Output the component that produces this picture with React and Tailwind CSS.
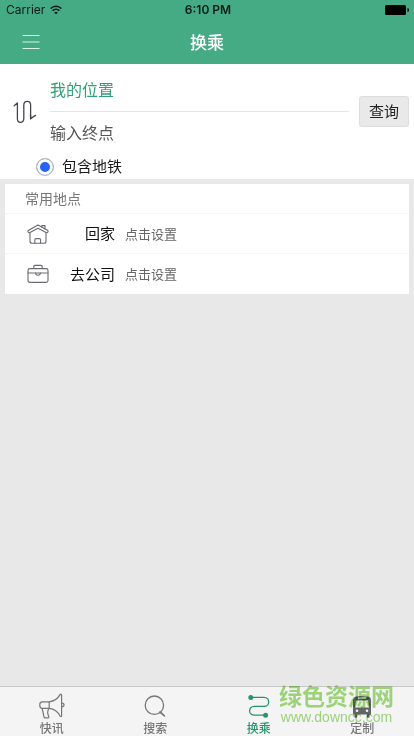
import React, { useState } from 'react';

const PLACES = [
  { id: 'home', name: '回家', Icon: HomeIcon },
  { id: 'work', name: '去公司', Icon: BriefcaseIcon },
];

const TABS = [
  { id: 'news', label: '快讯', Icon: MegaphoneIcon },
  { id: 'search', label: '搜索', Icon: SearchIcon },
  { id: 'transfer', label: '换乘', Icon: RouteIcon },
  { id: 'custom', label: '定制', Icon: BusIcon },
];

function WifiIcon() {
  return (
    <svg width="12" height="10" viewBox="0 0 12 10" fill="none" stroke="#0b1a14" strokeWidth="1.5" aria-hidden="true">
      <path d="M0.6 3.6 C3.6 0.4 8.4 0.4 11.4 3.6" />
      <path d="M2.6 5.7 C4.5 3.7 7.5 3.7 9.4 5.7" />
      <path d="M6 9.3 L4.2 7.4 C5.2 6.4 6.8 6.4 7.8 7.4 Z" fill="#0b1a14" stroke="none" />
    </svg>
  );
}

function BatteryIcon() {
  return (
    <svg width="25" height="10" viewBox="0 0 25 10" fill="#000" aria-hidden="true">
      <rect x="0" y="0" width="21" height="10" rx="1.5" />
      <path d="M22.5 3 C24.6 3.6 24.6 6.4 22.5 7 Z" />
    </svg>
  );
}

function SwapIcon() {
  return (
    <svg width="24" height="24" viewBox="0 0 24 24" fill="none" stroke="#44444c" strokeWidth="1.3" strokeLinecap="round" strokeLinejoin="round" aria-hidden="true">
      <path d="M1.2 5.8 L4.4 3 V18.8 C4.4 23.6 10.8 23.6 10.8 18.8 V5 C10.8 0.2 17.6 0.2 17.6 5 V18.8 L22.4 15.4" />
      <path d="M17.6 18.8 V15.6" />
    </svg>
  );
}

function HomeIcon() {
  return (
    <svg width="22" height="20" viewBox="0 0 22 20" fill="none" stroke="#6a6a72" strokeWidth="1.1" strokeLinecap="round" strokeLinejoin="round" aria-hidden="true">
      <path d="M11 0.9 L20.4 6.2 C21.8 7.2 20.7 9.3 19 8.6 L11 4.2 L3 8.6 C1.3 9.3 0.2 7.2 1.6 6.2 Z" />
      <path d="M3 8.8 V17.2 Q3 19.2 5 19.2 H17 Q19 19.2 19 17.2 V8.8" />
      <path d="M7.8 19 V15.8 Q7.8 14.6 9 14.6 H12.4 Q13.6 14.6 13.6 15.8 V19" />
      <path d="M14.8 2.9 V1.6 H18 V4.8" />
    </svg>
  );
}

function BriefcaseIcon() {
  return (
    <svg width="22" height="20" viewBox="0 0 22 20" fill="none" stroke="#6a6a72" strokeWidth="1.1" strokeLinecap="round" strokeLinejoin="round" aria-hidden="true">
      <rect x="1" y="4.6" width="20" height="13.8" rx="1.8" />
      <path d="M6.8 4.4 V2.6 Q6.8 1.4 8 1.4 H14 Q15.2 1.4 15.2 2.6 V4.4" />
      <path d="M1 9 H8.6 C8.8 12 13.2 12 13.4 9 H21" />
      <path d="M8.6 9 H13.4" />
    </svg>
  );
}

function MegaphoneIcon() {
  return (
    <svg width="26" height="26" viewBox="0 0 26 26" fill="none" stroke="#77777a" strokeWidth="1.2" strokeLinecap="round" strokeLinejoin="round" aria-hidden="true">
      <path d="M10.2 8.8 H3.4 Q0.8 8.8 0.8 11.6 V12.6 Q0.8 15.4 3.4 15.4 H10.2 Z" />
      <path d="M10.2 8.8 C15.4 8.2 19 5.4 21.2 1.4 Q22.6 0.6 22.6 2.4 V22.4 Q22.6 24.2 21.2 23.2 C19 19 15.4 16 10.2 15.4" />
      <path d="M22.6 10 C25.8 9.8 25.8 14 22.6 13.8" />
      <path d="M3.2 15.6 L5 24 Q5.2 24.8 6 24.8 H9 Q10.2 24.8 9.8 23.6 L8.8 20.8 Q8.4 19.4 9 17.8 L9.6 15.6" />
    </svg>
  );
}

function SearchIcon() {
  return (
    <svg width="26" height="26" viewBox="0 0 26 26" fill="none" stroke="#77777a" strokeWidth="1.3" strokeLinecap="round" aria-hidden="true">
      <circle cx="12.4" cy="12.2" r="9.2" />
      <path d="M18 19 L22.4 22.8" strokeWidth="1.7" />
    </svg>
  );
}

function RouteIcon() {
  return (
    <svg width="26" height="26" viewBox="0 0 26 26" fill="none" stroke="#2a9370" strokeWidth="1.3" aria-hidden="true">
      <path d="M5 4.4 H18 C24.2 4.4 24.2 13.4 18 13.4 H8.4 C2 13.4 2 22.2 8.4 22.2 H19" />
      <circle cx="4.8" cy="4.4" r="2.5" fill="#2a9370" stroke="none" />
      <circle cx="19.6" cy="22.2" r="2.5" fill="#2a9370" stroke="none" />
    </svg>
  );
}

function BusIcon() {
  return (
    <svg width="26" height="26" viewBox="0 0 26 26" fill="#626466" aria-hidden="true">
      <path
        fillRule="evenodd"
        d="M7 3.6 Q13 2.4 19 3.6 Q22 4.2 22 7.4 V21.6 H20.6 V23.6 Q20.6 24.8 19.6 24.8 H18.8 Q17.8 24.8 17.8 23.6 V21.6 H8.2 V23.6 Q8.2 24.8 7.2 24.8 H6.4 Q5.4 24.8 5.4 23.6 V21.6 H4 V7.4 Q4 4.2 7 3.6 Z
           M9 4.6 H17 V5.8 H9 Z
           M6.8 7.4 H19.2 L20 14.4 H6 Z
           M8 16.4 A1.3 1.3 0 1 0 8 19 A1.3 1.3 0 1 0 8 16.4 Z
           M18 16.4 A1.3 1.3 0 1 0 18 19 A1.3 1.3 0 1 0 18 16.4 Z"
      />
    </svg>
  );
}

function Header() {
  return (
    <header className="bg-[#45ab84]">
      <div className="grid h-5 grid-cols-3 items-center pr-1 pl-1.5 font-['Inter',sans-serif] text-xs text-[#0b1a14]">
        <div className="flex items-center gap-[5px]">
          <span>Carrier</span>
          <WifiIcon />
        </div>
        <div className="text-center font-semibold">6:10 PM</div>
        <div className="flex justify-end"><BatteryIcon /></div>
      </div>
      <div className="grid h-11 grid-cols-3 items-center px-[19px]">
        <button type="button" aria-label="菜单" className="flex w-6 justify-center">
          <svg width="18" height="16" viewBox="0 0 18 16" stroke="#d9f3e7" strokeWidth="1.2" aria-hidden="true">
            <path d="M0.5 1.5 H17.5 M0.5 8 H17.5 M0.5 14.5 H17.5" />
          </svg>
        </button>
        <h1 className="text-center text-[17px] font-medium text-white">换乘</h1>
      </div>
    </header>
  );
}

function SearchForm() {
  const [from, setFrom] = useState('我的位置');
  const [to, setTo] = useState('');

  const swap = () => {
    setFrom(to);
    setTo(from);
  };

  return (
    <form className="bg-white pt-[5px]" onSubmit={(e) => e.preventDefault()}>
      <div className="flex items-center pr-[5px]">
        <button type="button" aria-label="交换起点和终点" onClick={swap} className="flex w-[50px] shrink-0 justify-center">
          <SwapIcon />
        </button>
        <div className="min-w-0 flex-1 divide-y divide-[#e6e6e6]">
          <input
            aria-label="起点"
            value={from}
            onChange={(e) => setFrom(e.target.value)}
            className="block h-[43px] w-full pb-0.5 text-base text-[#30a076] outline-none"
          />
          <input
            aria-label="终点"
            placeholder="输入终点"
            value={to}
            onChange={(e) => setTo(e.target.value)}
            className="block h-[42px] w-full pb-0.5 text-base text-[#555] outline-none placeholder:text-[#555]"
          />
        </div>
        <button type="submit" className="ml-2.5 h-[31px] w-[50px] shrink-0 rounded-[3px] border border-[#dcdcdc] bg-[#e9e9e9] text-[15px] text-[#222]">
          查询
        </button>
      </div>
      <label className="flex h-[25px] items-center gap-2 pl-9 text-[15px] text-[#1a1a1a]">
        <input
          type="radio"
          name="subway"
          defaultChecked
          className="size-[18px] appearance-none rounded-full border border-[#bdbdbd] bg-white checked:bg-[#2465f0] checked:shadow-[inset_0_0_0_3px_#fff]"
        />
        包含地铁
      </label>
    </form>
  );
}

function Places() {
  return (
    <section className="divide-y divide-[#f5f5f5] bg-white">
      <h2 className="flex h-[30px] items-center pb-0.5 pl-5 text-sm text-[#777]">常用地点</h2>
      {PLACES.map(({ id, name, Icon }) => (
        <button key={id} type="button" className="flex h-10 w-full items-center pl-[22px]">
          <Icon />
          <span className="w-[66px] text-right text-[15px] text-[#111]">{name}</span>
          <span className="ml-2.5 text-[13px] text-[#666]">点击设置</span>
        </button>
      ))}
    </section>
  );
}

function TabBar() {
  const [active, setActive] = useState('transfer');

  return (
    <nav className="relative grid h-[50px] grid-cols-4 border-t border-[#c8c8c8] bg-[#f4f4f4]">
      {TABS.map(({ id, label, Icon }) => (
        <button
          key={id}
          type="button"
          onClick={() => setActive(id)}
          className={`flex flex-col items-center gap-px pt-1.5 text-xs font-medium ${active === id ? 'text-[#2a9370]' : 'text-[#77777a]'}`}
        >
          <Icon />
          {label}
        </button>
      ))}
      <div className="pointer-events-none absolute -top-1 right-5 text-center text-[#a4dc80] mix-blend-multiply">
        <div className="text-[23px] leading-6 font-bold">绿色资源网</div>
        <div className="pt-0.5 font-['Liberation_Sans',sans-serif] text-sm leading-4">www.downcc.com</div>
      </div>
    </nav>
  );
}

export default function App() {
  return (
    <div className="flex min-h-screen flex-col bg-[#e8e8e8] font-['Noto_Sans_CJK_SC',sans-serif]">
      <Header />
      <main className="flex-1">
        <SearchForm />
        <div className="p-[5px]">
          <Places />
        </div>
      </main>
      <TabBar />
    </div>
  );
}
